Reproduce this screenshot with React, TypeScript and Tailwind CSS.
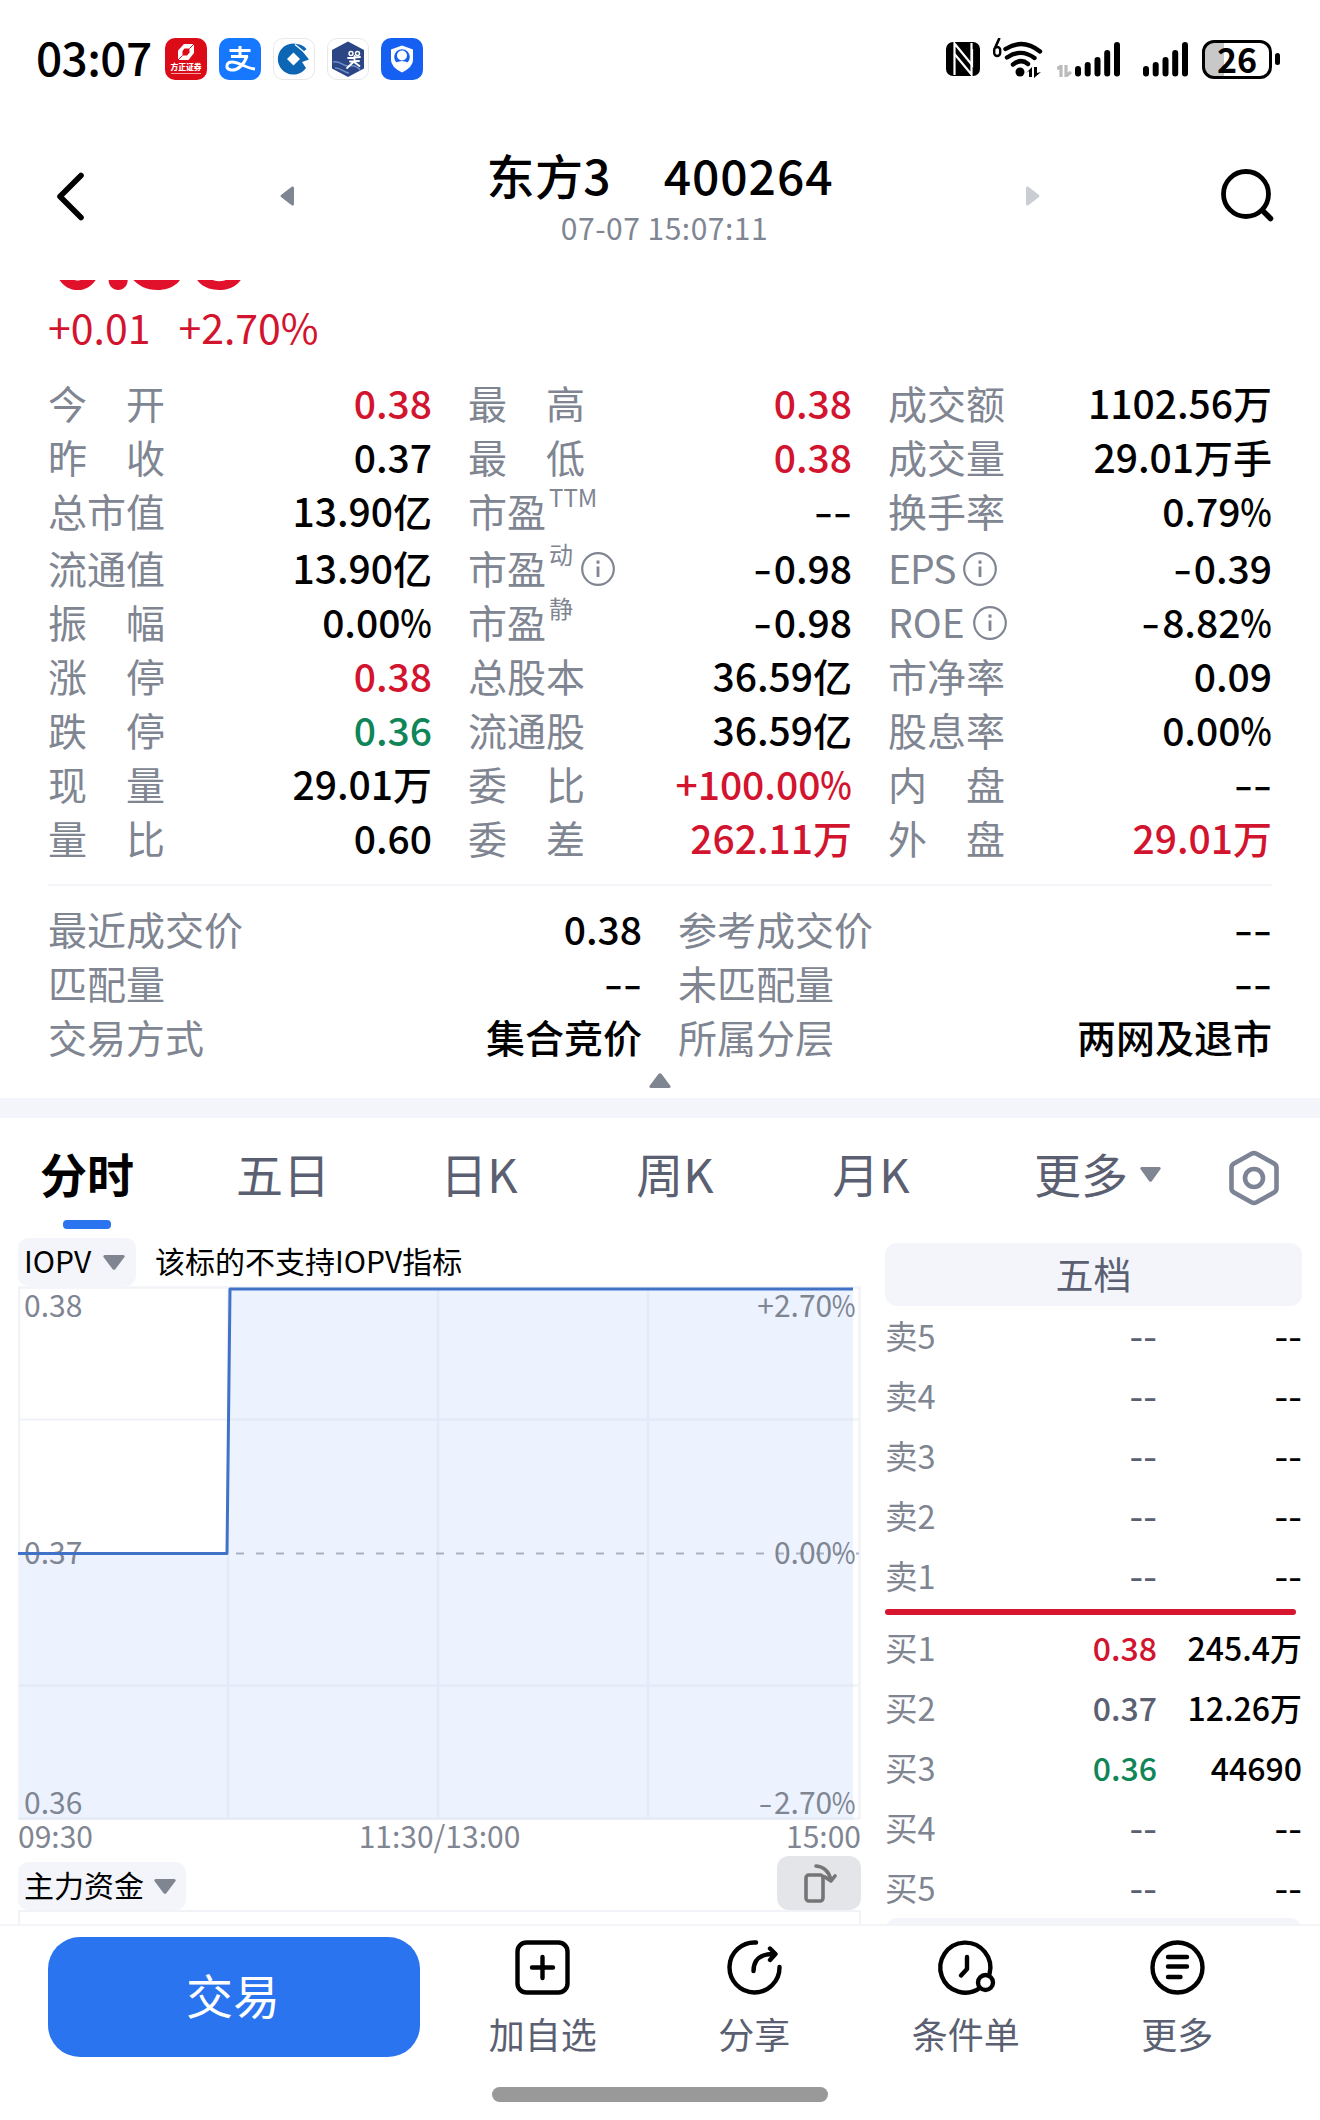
import React from 'react';

type Tone = 'up' | 'down' | 'flat' | 'mute';

interface Quote { label: string; value: string; tone?: Tone; sup?: string; info?: boolean; }

const toneClass: Record<Tone, string> = {
  up: 'text-[#d2142f]',
  down: 'text-[#0f8558]',
  flat: 'text-black',
  mute: 'text-[#5a6071]',
};

const columns: Quote[][] = [
  [
    { label: '今开', value: '0.38', tone: 'up' },
    { label: '昨收', value: '0.37' },
    { label: '总市值', value: '13.90亿' },
    { label: '流通值', value: '13.90亿' },
    { label: '振幅', value: '0.00%' },
    { label: '涨停', value: '0.38', tone: 'up' },
    { label: '跌停', value: '0.36', tone: 'down' },
    { label: '现量', value: '29.01万' },
    { label: '量比', value: '0.60' },
  ],
  [
    { label: '最高', value: '0.38', tone: 'up' },
    { label: '最低', value: '0.38', tone: 'up' },
    { label: '市盈', sup: 'TTM', value: '--' },
    { label: '市盈', sup: '动', info: true, value: '-0.98' },
    { label: '市盈', sup: '静', value: '-0.98' },
    { label: '总股本', value: '36.59亿' },
    { label: '流通股', value: '36.59亿' },
    { label: '委比', value: '+100.00%', tone: 'up' },
    { label: '委差', value: '262.11万', tone: 'up' },
  ],
  [
    { label: '成交额', value: '1102.56万' },
    { label: '成交量', value: '29.01万手' },
    { label: '换手率', value: '0.79%' },
    { label: 'EPS', info: true, value: '-0.39' },
    { label: 'ROE', info: true, value: '-8.82%' },
    { label: '市净率', value: '0.09' },
    { label: '股息率', value: '0.00%' },
    { label: '内盘', value: '--' },
    { label: '外盘', value: '29.01万', tone: 'up' },
  ],
];

const extras: Quote[][] = [
  [
    { label: '最近成交价', value: '0.38' },
    { label: '匹配量', value: '--' },
    { label: '交易方式', value: '集合竞价' },
  ],
  [
    { label: '参考成交价', value: '--' },
    { label: '未匹配量', value: '--' },
    { label: '所属分层', value: '两网及退市' },
  ],
];

interface Level { name: string; price: string; volume: string; tone?: Tone; }

const asks: Level[] = ['卖5', '卖4', '卖3', '卖2', '卖1'].map(name => ({ name, price: '--', volume: '--' }));
const bids: Level[] = [
  { name: '买1', price: '0.38', volume: '245.4万', tone: 'up' },
  { name: '买2', price: '0.37', volume: '12.26万' },
  { name: '买3', price: '0.36', volume: '44690', tone: 'down' },
  { name: '买4', price: '--', volume: '--' },
  { name: '买5', price: '--', volume: '--' },
];

// Dashes are a bit wider and percent signs a bit narrower than the font draws them
const Value = ({ text, compact }: { text: string; compact?: boolean }) => {
  if (text === '--') return <span className={`inline-block origin-right ${compact ? 'scale-x-[1.2]' : 'scale-x-[1.36]'}`}>--</span>;
  const negative = text.startsWith('-');
  const percent = text.endsWith('%');
  const body = text.slice(negative ? 1 : 0, percent ? -1 : undefined);
  return (
    <>
      {negative && <span className="mr-[2px] inline-block origin-right scale-x-[1.34]">-</span>}
      {body}
      {percent && <span className="-ml-[0.13em] inline-block origin-right scale-x-[0.86]">%</span>}
    </>
  );
};

const InfoIcon = () => (
  <svg className="h-[36px] w-[36px]" viewBox="0 0 36 36" fill="none" stroke="#808592" strokeWidth="2.2">
    <circle cx="18" cy="18" r="15.8" />
    <path d="M18 15.5V26" strokeWidth="2.8" />
    <path d="M18 9.5v3.2" strokeWidth="3" />
  </svg>
);

const QuoteRow = ({ label, value, tone = 'flat', sup, info }: Quote) => (
  <div className={`flex h-[54px] items-center justify-between ${sup === '动' || label === 'EPS' || label === '流通值' ? 'mt-[3px]' : ''}`}>
    <span className="flex items-center text-[#808592]">
      {label.length === 2 && !sup ? (
        <span className="flex w-[117px] justify-between"><span>{label[0]}</span><span>{label[1]}</span></span>
      ) : (
        <span className={label === 'EPS' ? 'tracking-[-1px]' : ''}>{label}</span>
      )}
      {sup && <span className="ml-[3px] self-start text-[24px] leading-[28px]">{sup}</span>}
      {info && <span className="ml-[7px] mt-[3px]"><InfoIcon /></span>}
    </span>
    <span className={`font-medium ${toneClass[tone]}`}><Value text={value} /></span>
  </div>
);

const Triangle = ({ className }: { className: string }) => (
  <svg className={className} viewBox="0 0 20 14" preserveAspectRatio="none" fill="currentColor">
    <path d="M1.6 0H18.4Q20.4 .4 19.4 2.2L11.4 13Q10 14.6 8.6 13L.6 2.2Q-.4 .4 1.6 0Z" />
  </svg>
);

const Signal = () => (
  <svg className="h-[38px] w-[46px]" viewBox="0 0 46 38" stroke="#000" strokeWidth="6" strokeLinecap="round">
    <path d="M3 29v4.500M12.700 25v8.500M22.500 20v13.500M32.200 13v20.500M42 5v28.500" />
  </svg>
);

const StatusBar = () => (
  <div className="flex h-[112px] shrink-0 items-start pl-[36px] pr-[40px] pt-[38px]">
    <span className="-mt-[1px] mb-[1px] w-[129px] text-[46px] font-medium leading-[38px] tracking-[-0.6px]">03:07</span>
    <div className="flex gap-[12px]">
      <div className="flex h-[42px] w-[42px] flex-col items-center rounded-[10px] bg-[#dc0b18] text-white">
        <svg className="mt-[5px] h-[18px] w-[18px]" viewBox="0 0 18 18">
          <path d="M7 1H17V10L11.500 17H1V7.500Z" fill="#fff" />
          <path d="M7.500 5.500H12.500V9.500L10 12.500H5.500V8Z" fill="#dc0b18" />
          <path d="M12.500 5.500L17 1M1 17l4.500-4.500" stroke="#dc0b18" strokeWidth="1" />
        </svg>
        <span className="whitespace-nowrap text-[7.800px] font-black leading-[11px]">方正证券</span>
        <span className="mt-[1px] h-[1px] w-[30px] bg-[#f3a0a4]" />
      </div>
      <svg className="h-[42px] w-[42px]" viewBox="0 0 42 42">
        <rect width="42" height="42" rx="10" fill="#1677ff" />
        <g fill="none" stroke="#fff" strokeWidth="3">
          <path d="M10.500 12.500h21M21 8V18M12 18.500h17" />
          <path d="M28 18C25 27 18 33 12 32c-6-1-5-8 1-8 7 0 13 6 23 7" />
        </g>
      </svg>
      <svg className="h-[42px] w-[42px]" viewBox="0 0 42 42">
        <rect x=".5" y=".5" width="41" height="41" rx="9.500" fill="#fff" stroke="#e8e8e8" />
        <path d="M24 6A15.500 15.500 0 1 0 33 30L29 24 36 21.500 30 14 33.500 11A15 15 0 0 0 24 6Z" fill="#0d66b3" />
        <path d="M20.500 14.500l6.500 6.500-6.500 6.500-6.500-6.500Z" fill="#fff" />
        <path d="M22 6.500L36 18" stroke="#fff" strokeWidth="1.400" />
      </svg>
      <svg className="h-[42px] w-[42px]" viewBox="0 0 42 42">
        <rect x=".5" y=".5" width="41" height="41" rx="9.500" fill="#fff" stroke="#e8e8e8" />
        <path d="M21 3.500L37 12v18.500L21 39 5 30.500V12Z" fill="#2b4585" />
        <path d="M6 24c7-2 10 5 16 4s9 1 11 4M8 30c5-1 9 5 14 5" stroke="#6f90c8" strokeWidth="1.500" fill="none" />
        <circle cx="24" cy="15.500" r="2" stroke="#fff" strokeWidth="1.400" fill="none" />
        <circle cx="30.500" cy="15.500" r="2" stroke="#fff" strokeWidth="1.400" fill="none" />
        <path d="M21 20l12-1M23 23.500l9-.500M27.500 18v5L20 30M27 24l5.500 4" stroke="#fff" strokeWidth="1.800" fill="none" strokeLinecap="round" />
      </svg>
      <svg className="h-[42px] w-[42px]" viewBox="0 0 42 42">
        <rect width="42" height="42" rx="10" fill="#1560f2" />
        <path d="M21 7.500L32 11.500V22q0 7-11 12.500Q10 29 10 22V11.500Z" fill="#fff" />
        <circle cx="21" cy="19" r="7.800" fill="#1560f2" />
        <circle cx="21" cy="17.500" r="5" fill="#fff" />
        <path d="M13 25.500q8-5 16 0Q27 29.500 21 32 15 29.500 13 25.500Z" fill="#fff" />
      </svg>
    </div>

    <div className="ml-auto flex items-start">
      <svg className="mt-[4px] h-[34px] w-[34px]" viewBox="0 0 34 34">
        <rect width="34" height="34" rx="7" />
        <path d="M8.500 33V1.500L26 23V7" fill="none" stroke="#fff" strokeWidth="2.200" />
        <path d="M25.500 1v31.500L8.500 12" fill="none" stroke="#fff" strokeWidth="2.200" />
      </svg>
      <svg className="ml-[11px] h-[42px] w-[54px]" viewBox="0 0 54 42" fill="none" stroke="#000">
        <path d="M8.500 0L4 10" strokeWidth="2.600" />
        <rect x="3.200" y="9" width="6" height="9" rx="3" strokeWidth="2.400" />
        <g strokeWidth="4.400" strokeLinecap="round">
          <path d="M14.500 11Q32 0 49 13.500" />
          <path d="M16 19.500Q30 10 43.500 20" />
          <path d="M22 26.500Q30 20 37 26" />
        </g>
        <circle cx="29" cy="34" r="4.500" fill="#000" stroke="none" />
        <path d="M35 35l6-6v10h-3v-6ZM43 29h3v6l4-1-7 6Z" fill="#000" stroke="none" />
      </svg>
      <svg className="ml-[12px] mt-[27px] h-[12px] w-[15px]" viewBox="0 0 15 12" fill="none" stroke="#bbb" strokeWidth="3.200">
        <path d="M0 4l4-3v11M9 12V1M9 0v11l5-4" />
      </svg>
      <div className="ml-[3px] mt-[2px]"><Signal /></div>
      <div className="ml-[22px] mt-[2px]"><Signal /></div>
      <div className="ml-[13px] mt-[2px] flex h-[39px] w-[70px] items-center justify-center rounded-[12px] border-[3px] border-black bg-[linear-gradient(to_right,#c8c8c8_30%,#fff_30%)] text-[34px] font-bold leading-none">
        <span className="-mt-[2px]">26</span>
      </div>
      <div className="ml-[3px] mt-[15px] h-[12px] w-[5px] rounded-full bg-black" />
    </div>
  </div>
);

const Header = () => (
  <div className="flex h-[168px] shrink-0 items-start pl-[54px]">
    <svg className="mt-[58px] h-[52px] w-[34px]" viewBox="0 0 34 52" fill="none" stroke="#000" strokeWidth="5.600" strokeLinecap="round" strokeLinejoin="round">
      <path d="M27 5.500L6 26.500l21 21" />
    </svg>
    <svg className="ml-[192px] mt-[73px] h-[22px] w-[14px] text-[#808592]" viewBox="0 0 14 22" fill="currentColor"><path d="M12 1.500L1 10q-1 1 0 2l11 8.500q2 .5 2-1.500V3q0-2-2-1.500Z" /></svg>
    <div className="flex w-[732px] flex-col items-center">
      <div className="mt-[27px] flex h-[69px] items-center gap-[53px] whitespace-nowrap text-[48px] font-medium">
        <span className="tracking-[0.3px]">东方3</span>
        <span className="tracking-[0.9px]">400264</span>
      </div>
      <div className="h-[38px] pl-[9px] text-[30px] leading-[38px] tracking-[0.5px] text-[#808592]">07-07 15:07:11</div>
    </div>
    <svg className="mt-[73px] h-[22px] w-[14px] text-[#cbcdd5]" viewBox="0 0 14 22" fill="currentColor"><path d="M2 1.500L13 10q1 1 0 2L2 20.500q-2 .5-2-1.500V3q0-2 2-1.500Z" /></svg>
    <svg className="ml-[180px] mt-[56px] h-[54px] w-[54px]" viewBox="0 0 54 54" fill="none" stroke="#000" strokeWidth="4.800" strokeLinecap="round">
      <circle cx="26" cy="26" r="22.500" />
      <path d="M43 43l7.500 7.500" strokeWidth="5.500" />
    </svg>
  </div>
);

const tabs = ['分时', '五日', '日K', '周K', '月K'];

const Tabs = () => (
  <div className="flex h-[120px] shrink-0 text-[47px] text-[#5a6071]">
    <div className="-ml-[11px] flex">
      {tabs.map((t, i) => (
        <div key={t} className="flex w-[196px] flex-col items-center">
          <span className={`mt-[21px] h-[68px] leading-[68px] ${i === 0 ? 'font-bold text-black' : ''}`}>{t}</span>
          {i === 0 && <span className="mt-[13px] h-[9px] w-[48px] rounded-[4px] bg-[#2b74f0]" />}
        </div>
      ))}
    </div>
    <span className="ml-[65px] mt-[21px] h-[68px] leading-[68px]">更多</span>
    <Triangle className="ml-[12px] mt-[49px] h-[15px] w-[21px] text-[#808592]" />
    <svg className="ml-[67px] mt-[32px] h-[56px] w-[52px]" viewBox="0 0 52 56" fill="none" stroke="#7d8496" strokeWidth="4.600" strokeLinejoin="round">
      <path d="M23.500 3.700Q26 2.500 28.500 3.700L46 13.500Q48.500 15 48.500 17.500v21q0 2.500-2.500 4L28.500 52.300Q26 53.500 23.500 52.300L6 42.500Q3.500 41 3.500 38.500v-21Q3.500 15 6 13.500Z" />
      <circle cx="26" cy="28" r="9" />
    </svg>
  </div>
);

const Chart = () => (
  <div className="relative h-[534px] w-[843px]">
    <svg className="h-[534px] w-[843px]" viewBox="0 0 843 534" fill="none">
      <g stroke="#f2f3f8" strokeWidth="2.500">
        <path d="M1.200 1.500H841.500V532.500H1.200ZM1 133.500H841M1 399.500H841M210 1V533M420 1V533M630 1V533" />
      </g>
      <path d="M1 267.500H209L212 3H835V533H1Z" fill="#ecf3fe" />
      <path d="M212 133.500H835M1 399.500H835M210 267V533M420 4V533M630 4V533M1 532.500H835" stroke="#e3eaf8" strokeWidth="2.500" />
      <path d="M218 267.500H841" stroke="#a9b1c3" strokeWidth="2.200" strokeDasharray="8 12" />
    </svg>
    <div className="absolute inset-0 text-[30px] leading-[36px] text-[#808592]">
      <span className="absolute left-[6px] top-0">0.38</span>
      <span className="absolute left-[6px] top-[247px]">0.37</span>
      <span className="absolute left-[6px] top-[497px]">0.36</span>
      <span className="absolute right-[5px] top-0"><Value text="+2.70%" /></span>
      <span className="absolute right-[5px] top-[247px]"><Value text="0.00%" /></span>
      <span className="absolute right-[5px] top-[497px]"><Value text="-2.70%" /></span>
    </div>
    <svg className="absolute inset-0 h-[534px] w-[843px]" viewBox="0 0 843 534" fill="none">
      <path d="M0 267.500H209L212 3H835" stroke="#4072c8" strokeWidth="3" strokeLinejoin="round" />
    </svg>
  </div>
);

const BookRow = ({ name, price, volume, tone = 'mute' }: Level) => (
  <div className="flex h-[60px] items-center text-[32px]">
    <span className="w-[100px] text-[32.500px] text-[#808592]">{name}</span>
    <span className={`w-[172px] text-right font-medium ${toneClass[tone]}`}><Value text={price} compact /></span>
    <span className="flex-1 whitespace-nowrap text-right font-medium"><Value text={volume} compact /></span>
  </div>
);

const OrderBook = () => (
  <div className="ml-[24px] w-[417px] pt-[5px]">
    <div className="flex h-[63px] items-center justify-center rounded-[12px] bg-[#f4f5fa] pb-[4px] text-[38px] text-[#5a6071]">五档</div>
    <div className="-mt-[1px]">{asks.map(l => <BookRow key={l.name} {...l} />)}</div>
    <div className="mt-[4px] h-[6px] w-[411px] rounded-full bg-[#d8152f]" />
    <div className="pt-[2px]">{bids.map(l => <BookRow key={l.name} {...l} />)}</div>
    <div className="mt-[1px] h-[40px] rounded-[12px] bg-[#f4f5fa]" />
  </div>
);

const navIcons: { label: string; icon: React.ReactNode }[] = [
  { label: '加自选', icon: <><rect x="2.500" y="2.500" width="50" height="50" rx="9" /><path d="M27.500 17v21M17 27.500h21" /></> },
  { label: '分享', icon: <><path d="M29 2.500A25 25 0 1 0 52.500 27" /><path d="M26.500 31C26.500 20 33 14 46 14M43 8.500l5.500 5.500-5.500 6" /></> },
  { label: '条件单', icon: <><path d="M42.500 47.500A25 25 0 1 1 51.500 34" /><path d="M29 17v12l-6 6.500" /><circle cx="47.500" cy="42.500" r="7.500" fill="#fff" /></> },
  { label: '更多', icon: <><circle cx="27.500" cy="27.500" r="25" /><path d="M18 17h19M18 26.500h19M18 37h12.500" /></> },
];

const BottomNav = () => (
  <div className="flex h-[196px] shrink-0 flex-col border-t-2 border-[#f3f4f7] bg-white">
    <div className="flex h-[161px]">
      <button className="ml-[48px] mt-[11px] h-[120px] w-[372px] rounded-[32px] bg-[#2b74f0] pb-[6px] pr-[2px] text-[47px] leading-[114px] text-white">交易</button>
      <div className="ml-[17px] flex">
        {navIcons.map(({ label, icon }) => (
          <div key={label} className="flex w-[211.500px] flex-col items-center">
            <svg className="mt-[14px] h-[55px] w-[55px] overflow-visible" viewBox="0 0 55 55" fill="none" stroke="#000" strokeWidth="4.400" strokeLinecap="round" strokeLinejoin="round">{icon}</svg>
            <span className="mt-[14px] text-[36px] leading-[48px] text-[#5a6071]">{label}</span>
          </div>
        ))}
      </div>
    </div>
    <div className="mx-auto h-[15px] w-[336px] rounded-full bg-[#999]" />
  </div>
);

export default function App() {
  return (
    <div className="flex h-[2120px] w-[1320px] flex-col overflow-hidden bg-white font-['Noto_Sans_CJK_SC',sans-serif] text-black">
      <StatusBar />
      <Header />

      {/* Last price, scrolled under the header */}
      <div className="flex h-[10px] shrink-0 items-end overflow-hidden pl-[48px] text-[104px] font-medium leading-[92px] text-[#e2112b]">
        <span>0</span>
        <span className="-ml-[6px] -mr-[5px] font-bold">.</span>
        <span>38</span>
      </div>
      <div className="flex h-[85px] shrink-0 gap-[28px] pl-[48px] text-[41px] leading-[72px] text-[#d2142f]">
        <span>+0.01</span>
        <span>+2.70%</span>
      </div>

      <div className="mx-[48px] grid shrink-0 grid-cols-3 gap-x-[36px] text-[39px] leading-[54px]">
        {columns.map((col, i) => (
          <div key={i}>{col.map(q => <QuoteRow key={q.label + (q.sup ?? '')} {...q} />)}</div>
        ))}
      </div>
      <div className="mx-[48px] mt-[20px] h-[2px] shrink-0 bg-[#f3f4f8]" />
      <div className="mx-[48px] mt-[15px] grid shrink-0 grid-cols-2 gap-x-[36px] text-[39px] leading-[54px]">
        {extras.map((col, i) => (
          <div key={i}>{col.map(q => <QuoteRow key={q.label} {...q} />)}</div>
        ))}
      </div>
      <Triangle className="mx-auto mt-[10px] h-[15px] w-[22px] shrink-0 rotate-180 text-[#808592]" />
      <div className="mt-[10px] h-[20px] shrink-0 bg-[#f4f5fa]" />

      <Tabs />

      <div className="flex h-[686px] shrink-0 overflow-hidden pl-[18px]">
        <div className="w-[843px]">
          <div className="flex h-[48px] items-center">
            <div className="flex h-[48px] w-[118px] items-center rounded-[10px] bg-[#f4f5fa] pl-[6px] text-[30px]">
              <span className="pb-[4px]">IOPV</span><Triangle className="ml-[12px] h-[15px] w-[22px] text-[#808592]" />
            </div>
            <span className="ml-[19px] pb-[4px] text-[30px]">该标的不支持IOPV指标</span>
          </div>
          <Chart />
          <div className="flex h-[36px] justify-between text-[30px] leading-[30px] text-[#808592]">
            <span>09:30</span><span>11:30/13:00</span><span>15:00</span>
          </div>
          <div className="flex h-[54px] items-end justify-between">
            <div className="flex h-[48px] w-[168px] items-center rounded-[10px] bg-[#f4f5fa] pl-[6px] text-[30px]">
              <span className="pb-[4px]">主力资金</span><Triangle className="ml-[10px] h-[15px] w-[22px] text-[#808592]" />
            </div>
            <div className="flex h-[54px] w-[84px] items-center justify-center rounded-[12px] bg-[#e4e5e9]">
              <svg className="h-[42px] w-[38px]" viewBox="0 0 38 42" fill="none" stroke="#757575" strokeWidth="3.600" strokeLinecap="round" strokeLinejoin="round">
                <rect x="6" y="13" width="17" height="26" rx="3" />
                <path d="M16 4Q28 5 31 18M25 15l6 4 4-5" />
              </svg>
            </div>
          </div>
          <div className="h-[30px] border-2 border-[#f2f3f8]" />
        </div>
        <OrderBook />
      </div>

      <BottomNav />
    </div>
  );
}
